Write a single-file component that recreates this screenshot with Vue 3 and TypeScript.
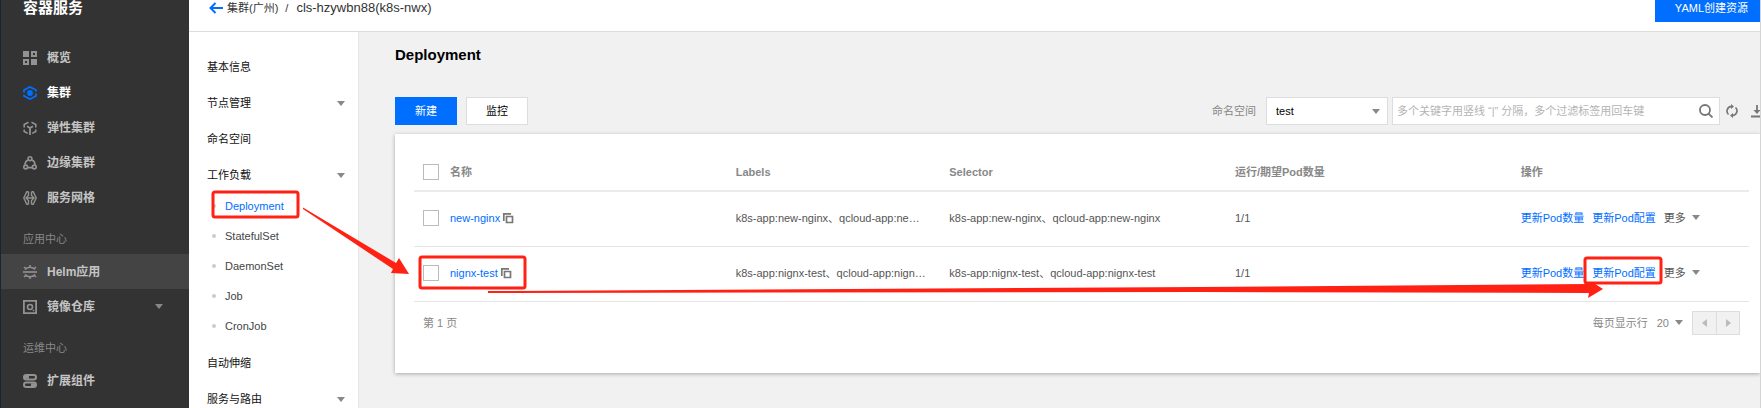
<script setup lang="ts">
import { ref } from 'vue'

type IconName = 'overview' | 'cluster' | 'elastic' | 'edge' | 'mesh' | 'helm' | 'registry' | 'addon'

interface MenuItem {
  label: string
  icon: IconName
  state?: 'active' | 'hover'
  expandable?: boolean
}

interface MenuGroup {
  title?: string
  items: MenuItem[]
}

interface NavItem {
  label: string
  expandable?: boolean
  children?: string[]
}

interface Workload {
  name: string
  labels: string
  pods: string
}

const menu: MenuGroup[] = [
  {
    items: [
      { label: '概览', icon: 'overview' },
      { label: '集群', icon: 'cluster', state: 'active' },
      { label: '弹性集群', icon: 'elastic' },
      { label: '边缘集群', icon: 'edge' },
      { label: '服务网格', icon: 'mesh' },
    ],
  },
  {
    title: '应用中心',
    items: [
      { label: 'Helm应用', icon: 'helm', state: 'hover' },
      { label: '镜像仓库', icon: 'registry', expandable: true },
    ],
  },
  {
    title: '运维中心',
    items: [{ label: '扩展组件', icon: 'addon' }],
  },
]

const nav: NavItem[] = [
  { label: '基本信息' },
  { label: '节点管理', expandable: true },
  { label: '命名空间' },
  {
    label: '工作负载',
    expandable: true,
    children: ['Deployment', 'StatefulSet', 'DaemonSet', 'Job', 'CronJob'],
  },
  { label: '自动伸缩' },
  { label: '服务与路由', expandable: true },
]

const rows: Workload[] = [
  { name: 'new-nginx', labels: 'k8s-app:new-nginx、qcloud-app:new-nginx', pods: '1/1' },
  { name: 'nignx-test', labels: 'k8s-app:nignx-test、qcloud-app:nignx-test', pods: '1/1' },
]

const current = ref('Deployment')
const namespace = ref('test')
const keyword = ref('')
const selected = ref<string[]>([])

function toggleAll(event: Event) {
  const checked = (event.target as HTMLInputElement).checked
  selected.value = checked ? rows.map((row) => row.name) : []
}
</script>

<template>
  <div class="console">
    <aside class="sidebar">
      <h2 class="product">容器服务</h2>
      <section v-for="(group, index) in menu" :key="index">
        <h3 v-if="group.title" class="group-title">{{ group.title }}</h3>
        <a v-for="item in group.items" :key="item.label" href="#" class="menu-item" :class="item.state">
          <svg class="menu-icon" viewBox="0 0 14 14" fill="none" stroke="currentColor" stroke-width="1.6" aria-hidden="true">
            <template v-if="item.icon === 'overview'">
              <path d="M0 0h6v6H0zM8 8h6v6H8z" fill="currentColor" stroke="none" />
              <path d="M9 1h4v4H9zM1 9h4v4H1z" stroke-width="2" />
            </template>
            <template v-else-if="item.icon === 'cluster'">
              <path d="M1 6.500V4L7 .900 13 4v1.500M1 8.800V10l6 3.100L13 10V7.500" stroke-width="1.800" />
              <circle cx="7" cy="7" r="2.900" fill="currentColor" stroke="none" />
            </template>
            <template v-else-if="item.icon === 'elastic'">
              <path d="M5.500 1.300 1.200 3.500v3M8.500 1.300l4.300 2.200v3M1.200 8.500v2l3.600 1.900M12.800 8.500v2l-3.600 1.900" />
              <path d="M7 14V7M4 5.200 7 7l3-1.800" stroke-width="1.800" />
            </template>
            <template v-else-if="item.icon === 'edge'">
              <circle cx="7" cy="2.700" r="1.900" />
              <circle cx="2.700" cy="11" r="1.900" />
              <circle cx="11.300" cy="11" r="1.900" />
              <path d="M4.800 4Q2 5.500 2 8.700M9.200 4Q12 5.500 12 8.700M4.800 11.600h4.400" />
            </template>
            <template v-else-if="item.icon === 'mesh'">
              <path d="M5.500 .800H3.800L.800 7l3 6.200h1.700M8.500 .800h1.700l3 6.200-3 6.200H8.500M3 7h8M5.500 .800v3.700L3 7l2.500 2.500v3.700M8.500 .800v3.700L11 7 8.500 9.500v3.700" stroke-width="1.400" />
            </template>
            <template v-else-if="item.icon === 'helm'">
              <path d="M0 7h14" />
              <path d="M2 4.600Q4 2.300 7 2.300t5 2.300M2 9.400q2 2.300 5 2.300t5-2.300M7 0v2M1 2l1.800 1.500M13 2l-1.800 1.500M7 14v-2M1 12l1.800-1.500M13 12l-1.800-1.500" />
            </template>
            <template v-else-if="item.icon === 'registry'">
              <path d="M.9.900h12.200v12.200H.9z" stroke-width="1.800" />
              <circle cx="7" cy="7" r="2.500" />
              <path d="M10 10l1 1" />
            </template>
            <template v-else>
              <rect x="1" y="1" width="12" height="4.400" rx="2.200" stroke-width="2" />
              <rect x="1" y="8.600" width="12" height="4.400" rx="2.200" stroke-width="2" />
              <path d="M2 3.200h4M8 10.800h4" stroke-width="3" />
            </template>
          </svg>
          <span>{{ item.label }}</span>
          <span v-if="item.expandable" class="caret menu-caret"></span>
        </a>
      </section>
    </aside>

    <div class="page">
      <header class="topbar">
        <a href="#" class="back" aria-label="返回">
          <svg viewBox="0 0 14 12" width="14" height="12" fill="none" stroke="currentColor" stroke-width="2">
            <path d="M6.500 1 1.500 6l5 5M1.500 6H14" />
          </svg>
        </a>
        <a href="#" class="crumb">集群(广州)</a>
        <span class="slash">/</span>
        <span class="crumb-current">cls-hzywbn88(k8s-nwx)</span>
        <button type="button" class="yaml">YAML创建资源</button>
      </header>

      <div class="body">
        <nav class="subnav">
          <ul>
            <li v-for="item in nav" :key="item.label" class="nav-group">
              <a href="#" class="nav-item">
                <span>{{ item.label }}</span>
                <span v-if="item.expandable" class="caret"></span>
              </a>
              <ul v-if="item.children" class="nav-children">
                <li v-for="child in item.children" :key="child">
                  <a href="#" class="nav-child" :class="{ current: child === current }" @click.prevent="current = child">{{ child }}</a>
                </li>
              </ul>
            </li>
          </ul>
        </nav>

        <main class="content">
          <h1>Deployment</h1>

          <div class="toolbar">
            <button type="button" class="btn primary">新建</button>
            <button type="button" class="btn">监控</button>
            <div class="filters">
              <label for="namespace">命名空间</label>
              <div class="select">
                <select id="namespace" v-model="namespace">
                  <option>test</option>
                  <option>default</option>
                </select>
                <span class="caret"></span>
              </div>
              <div class="search">
                <input v-model="keyword" type="text" aria-label="搜索" placeholder="多个关键字用竖线 “|” 分隔，多个过滤标签用回车键" />
                <button type="button" class="icon-btn" aria-label="查询">
                  <svg viewBox="0 0 14 14" width="14" height="14" fill="none" stroke="currentColor" stroke-width="1.800">
                    <circle cx="6" cy="6" r="5" />
                    <path d="m9.500 9.500 4 4" />
                  </svg>
                </button>
              </div>
              <button type="button" class="icon-btn refresh" aria-label="刷新">
                <svg viewBox="0 0 12 14" width="12" height="14" fill="none" stroke="currentColor" stroke-width="1.700">
                  <path d="M2.500 10.500A4.700 4.700 0 0 1 5.500 2.400M9.500 3.500a4.700 4.700 0 0 1-3 8.100" />
                  <path d="M5 0v5l3-2.500zM7 9v5l-3-2.500z" fill="currentColor" stroke="none" />
                </svg>
              </button>
              <button type="button" class="icon-btn" aria-label="下载">
                <svg viewBox="0 0 12 14" width="12" height="14" fill="none" stroke="currentColor" stroke-width="1.800">
                  <path d="M6 1v6M0 12.500h12" />
                  <path d="M2.500 6h7L6 10z" fill="currentColor" stroke="none" />
                </svg>
              </button>
            </div>
          </div>

          <section class="card">
            <table>
              <colgroup>
                <col class="col-check" />
                <col class="col-wide" />
                <col class="col-mid" />
                <col class="col-wide" />
                <col class="col-wide" />
                <col />
              </colgroup>
              <thead>
                <tr>
                  <th class="check"><input type="checkbox" aria-label="全选" :checked="selected.length === rows.length" @change="toggleAll" /></th>
                  <th>名称</th>
                  <th>Labels</th>
                  <th>Selector</th>
                  <th>运行/期望Pod数量</th>
                  <th>操作</th>
                </tr>
              </thead>
              <tbody>
                <tr v-for="row in rows" :key="row.name">
                  <td class="check"><input v-model="selected" type="checkbox" :value="row.name" :aria-label="row.name" /></td>
                  <td>
                    <div class="name">
                      <a href="#">{{ row.name }}</a>
                      <button type="button" class="icon-btn" aria-label="复制">
                        <svg viewBox="0 0 12 12" width="12" height="12" fill="none" stroke="currentColor" stroke-width="1.700">
                          <path d="M1.800 9V1.800H9M4.500 4.500h6v6h-6z" />
                        </svg>
                      </button>
                    </div>
                  </td>
                  <td><div class="clip">{{ row.labels }}</div></td>
                  <td>{{ row.labels }}</td>
                  <td>{{ row.pods }}</td>
                  <td>
                    <div class="actions">
                      <a href="#">更新Pod数量</a>
                      <a href="#">更新Pod配置</a>
                      <button type="button" class="more">更多<span class="caret"></span></button>
                    </div>
                  </td>
                </tr>
              </tbody>
            </table>
            <footer class="pager">
              <span>第 1 页</span>
              <div class="pager-tools">
                <span>每页显示行</span>
                <button type="button" class="size">20<span class="caret"></span></button>
                <div class="steps">
                  <button type="button" aria-label="上一页" disabled><span class="arrow prev"></span></button>
                  <button type="button" aria-label="下一页" disabled><span class="arrow next"></span></button>
                </div>
              </div>
            </footer>
          </section>
        </main>
      </div>
    </div>

    <svg class="marks" aria-hidden="true">
      <g fill="none" stroke="#ff2113" stroke-width="3">
        <rect x="213" y="192" width="85" height="25" rx="2" />
        <rect x="420" y="257" width="105" height="31" rx="2" />
        <rect x="1585" y="258" width="76" height="25" rx="2" />
      </g>
      <g fill="#ff2113">
        <path d="M303 207.500 396 263 399 258 409 274 391 273 393 269 303 209z" />
        <path d="M488 291 1200 287 1590 284 1592 282 1603 289 1588 298 1589 293 1200 292 488 293z" />
      </g>
    </svg>
  </div>
</template>

<style>
body {
  margin: 0;
}
</style>

<style scoped>
* {
  box-sizing: border-box;
}

.console {
  position: relative;
  display: flex;
  height: 100vh;
  overflow: hidden;
  border-left: 1px solid #16253a;
  border-right: 1px solid #d4d4d4;
  background: #f1f1f1;
  color: #555;
  font: 11px/16px "Liberation Sans", "Noto Sans CJK SC", sans-serif;
}

h1,
h2,
h3,
ul {
  margin: 0;
  padding: 0;
  list-style: none;
}

a {
  color: #006eff;
  text-decoration: none;
}

button,
input,
select {
  margin: 0;
  padding: 0;
  border: 0;
  border-radius: 0;
  background: none;
  color: inherit;
  font: inherit;
}

.caret {
  flex: none;
  width: 0;
  height: 0;
  border: 4px solid transparent;
  border-top: 5px solid #888;
  border-bottom: 0;
}

/* Sidebar */
.sidebar {
  flex: none;
  width: 188px;
  background: #333;
}

.product {
  height: 40px;
  padding-left: 22px;
  color: #fff;
  font-size: 15px;
  line-height: 16px;
}

.group-title {
  height: 39px;
  padding: 16px 0 0 22px;
  color: #888;
  font-size: 11px;
  font-weight: 400;
}

.menu-item {
  display: flex;
  align-items: center;
  height: 35px;
  padding: 0 26px 0 22px;
  color: #c4c4c4;
  font-size: 12px;
  font-weight: 700;
}

.menu-icon {
  width: 14px;
  height: 14px;
  margin-right: 10px;
  color: #929292;
}

.menu-item.active {
  color: #fff;
}

.menu-item.active .menu-icon {
  color: #006eff;
}

.menu-item.hover {
  background: #444;
}

.menu-caret {
  margin-left: auto;
}

/* Top bar */
.page {
  display: flex;
  flex: 1;
  flex-direction: column;
  min-width: 0;
}

.topbar {
  display: flex;
  flex: none;
  height: 32px;
  padding-left: 20px;
  border-bottom: 1px solid #dcdcdc;
  background: #fff;
  color: #333;
}

.back {
  padding-top: 2px;
  margin-right: 4px;
}

.crumb {
  color: #333;
}

.slash {
  margin: 0 8px 0 7px;
}

.crumb-current {
  font-size: 13px;
}

.yaml {
  height: 22px;
  padding: 0 12px 6px 20px;
  margin-left: auto;
  background: #006eff;
  color: #fff;
}

/* Cluster navigation */
.body {
  display: flex;
  flex: 1;
  min-height: 0;
}

.subnav {
  flex: none;
  width: 170px;
  padding: 20px 13px 0 18px;
  border-right: 1px solid #e6e6e6;
  background: #fff;
}

.nav-group {
  margin-bottom: 6px;
}

.nav-item,
.nav-child {
  display: flex;
  align-items: center;
  height: 30px;
}

.nav-item {
  justify-content: space-between;
  color: #111;
}

.nav-children {
  padding: 1px 0;
}

.nav-child {
  padding-left: 5px;
  color: #444;
}

.nav-child::before {
  width: 4px;
  height: 4px;
  margin-right: 9px;
  border-radius: 50%;
  background: #ccc;
  content: "";
}

.nav-child.current {
  color: #006eff;
}

/* Content */
.content {
  flex: 1;
  min-width: 0;
  padding: 13px 0 0 36px;
}

h1 {
  color: #000;
  font-size: 15px;
  line-height: 20px;
}

.toolbar {
  display: flex;
  gap: 9px;
  margin: 32px -3px 9px 0;
}

.btn {
  width: 62px;
  height: 28px;
  border: 1px solid #ddd;
  background: #fff;
  color: #000;
}

.btn.primary {
  border-color: #006eff;
  background: #006eff;
  color: #fff;
}

.filters {
  display: flex;
  align-items: center;
  margin-left: auto;
  color: #888;
}

.select {
  display: flex;
  align-items: center;
  width: 122px;
  margin: 0 4px 0 10px;
  border: 1px solid #ddd;
  background: #fff;
}

.select select {
  flex: 1;
  height: 26px;
  padding-left: 9px;
  margin-right: -15px;
  appearance: none;
  color: #000;
}

.select .caret {
  margin-right: 7px;
  pointer-events: none;
}

.search {
  display: flex;
  align-items: center;
  width: 328px;
  padding: 0 6px 0 4px;
  border: 1px solid #ddd;
  background: #fff;
}

.search input {
  flex: 1;
  min-width: 0;
  height: 26px;
  outline: 0;
  color: #333;
}

.search input::placeholder {
  color: #b4b4b4;
}

.icon-btn {
  display: flex;
  color: #777;
}

.refresh {
  margin: 0 13px 0 6px;
}

.card {
  padding: 19px 11px 38px 19px;
  background: #fff;
  box-shadow: 0 1px 4px rgba(0, 0, 0, 0.3);
}

table {
  width: 100%;
  table-layout: fixed;
  border-collapse: collapse;
}

.col-check {
  width: 36px;
}

.col-wide {
  width: 21.4%;
}

.col-mid {
  width: 16%;
}

th,
td {
  height: 55px;
  padding: 0;
  border-bottom: 1px solid #e5e5e5;
  text-align: left;
  white-space: nowrap;
}

td {
  padding-bottom: 2px;
}

th {
  height: 38px;
  border-bottom: 2px solid #ebebeb;
  color: #888;
}

.check {
  padding-left: 9px;
}

.check input {
  display: block;
  width: 16px;
  height: 16px;
  border: 1px solid #bbb;
  appearance: none;
  background: #fff;
}

.check input:checked {
  background: #006eff;
}

.name {
  display: flex;
  align-items: center;
  gap: 2px;
}

.clip {
  max-width: 191px;
  overflow: hidden;
  text-overflow: ellipsis;
}

.actions {
  display: flex;
  gap: 8px;
}

.more,
.size {
  display: flex;
  align-items: center;
  gap: 6px;
}

.pager {
  display: flex;
  align-items: center;
  justify-content: space-between;
  padding: 9px 9px 0;
  color: #888;
}

.pager-tools {
  display: flex;
  align-items: center;
  gap: 9px;
}

.steps {
  display: flex;
  border: 1px solid #ddd;
  background: #f1f1f1;
}

.steps button {
  display: grid;
  width: 23px;
  height: 22px;
  place-items: center;
}

.steps button + button {
  border-left: 1px solid #ddd;
}

.arrow {
  border: 4px solid transparent;
}

.prev {
  border-right: 5px solid #bbb;
  border-left: 0;
}

.next {
  border-right: 0;
  border-left: 5px solid #bbb;
}

.marks {
  position: absolute;
  top: 0;
  left: -1px;
  width: calc(100% + 1px);
  height: 100%;
  pointer-events: none;
}
</style>
